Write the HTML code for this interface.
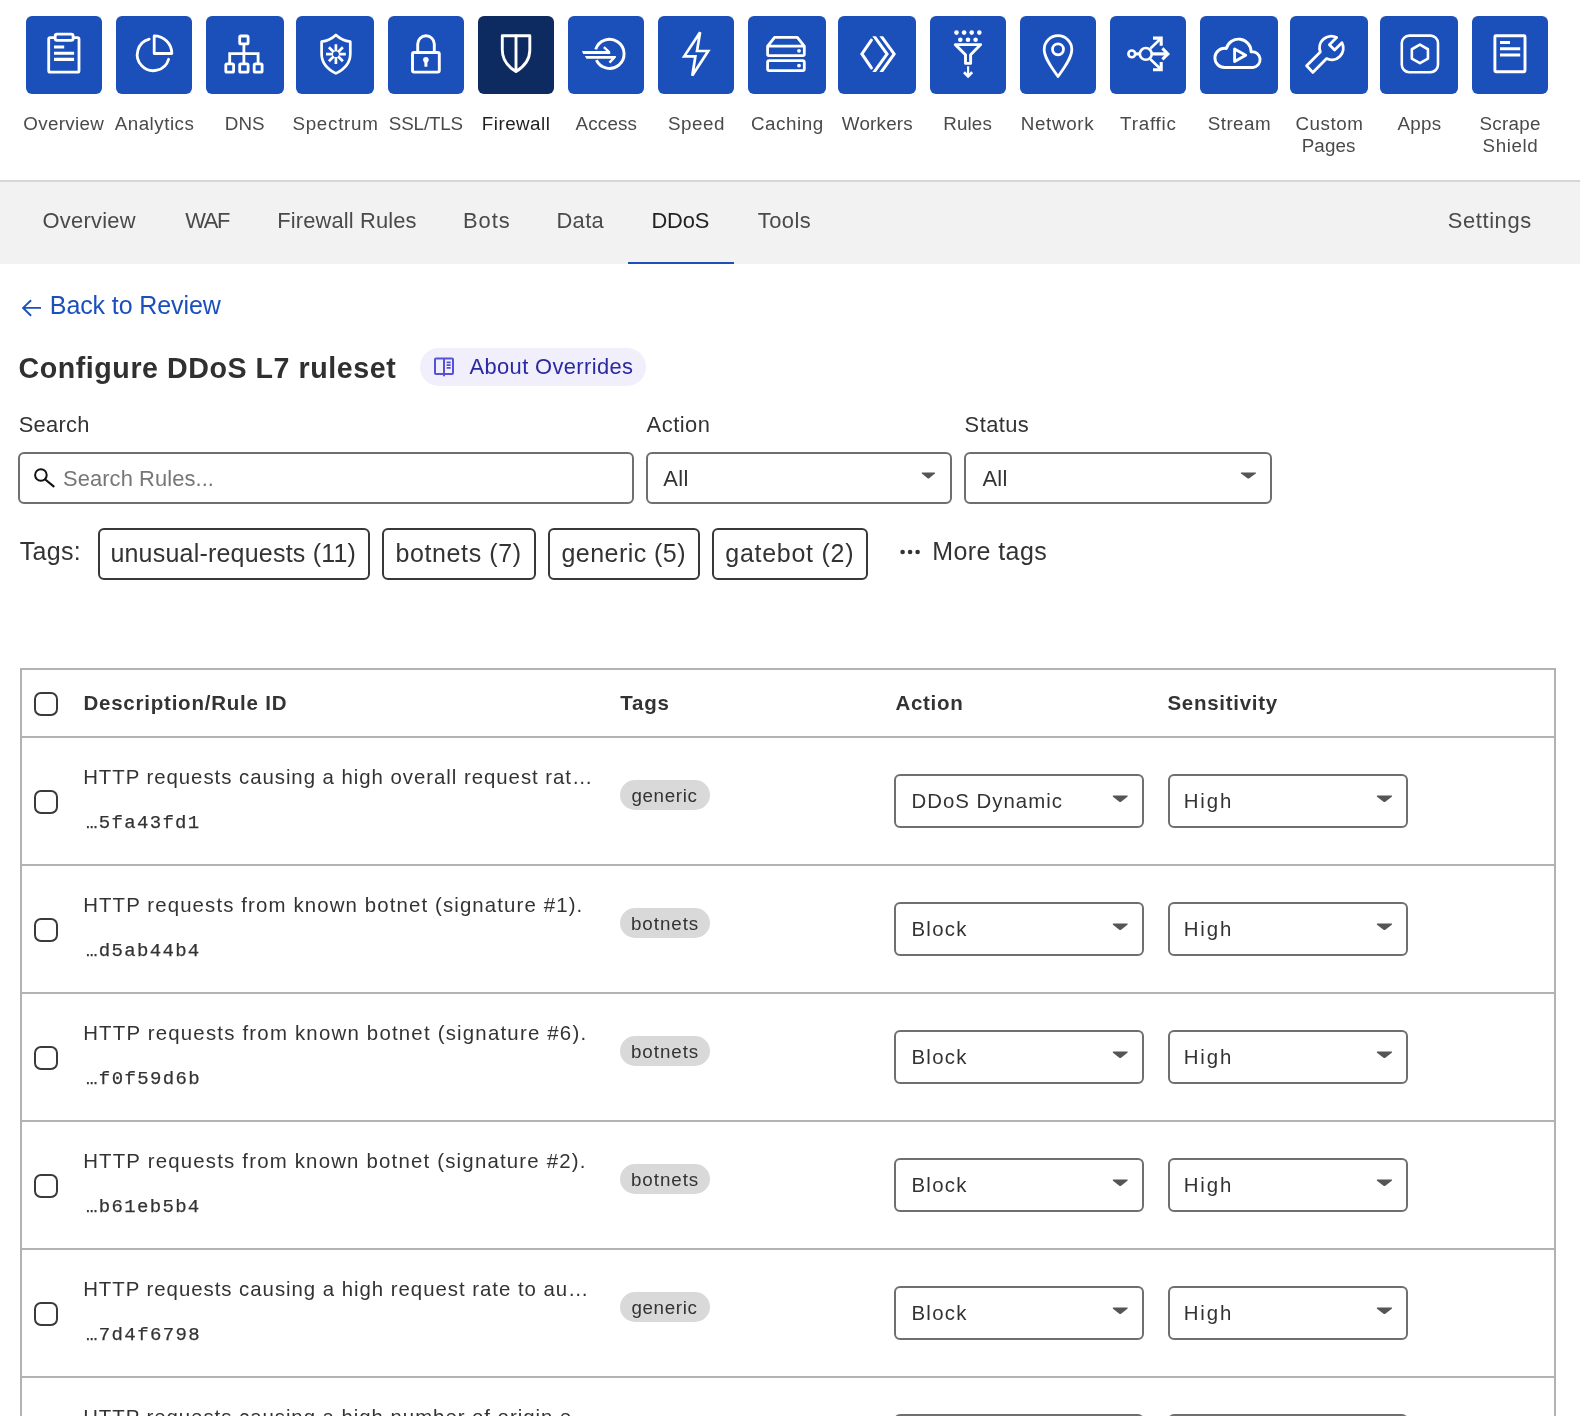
<!DOCTYPE html>
<html lang="en"><head><meta charset="utf-8"><title>Configure DDoS L7 ruleset</title>
<style>
html,body{margin:0;padding:0;background:#fff}
body{width:1580px;height:1416px;position:relative;overflow:hidden;font-family:"Liberation Sans",sans-serif;font-kerning:normal;-webkit-font-smoothing:antialiased}
.t{position:absolute;white-space:pre;line-height:1;display:block}
.b{position:absolute;box-sizing:border-box}
svg{position:absolute;overflow:visible}
#page{position:absolute;left:0;top:0;width:1580px;height:1416px;will-change:transform}
</style></head><body><div id="page">
<div class="b" style="left:26.00px;top:16.00px;width:76.00px;height:78.00px;background:#1b50bb;border-radius:6px"></div>
<span class="t" style="left:23.26px;top:115.10px;font-size:18.80px;letter-spacing:0.314px;color:#4a4a4a;">Overview</span>
<div class="b" style="left:116.00px;top:16.00px;width:76.00px;height:78.00px;background:#1b50bb;border-radius:6px"></div>
<span class="t" style="left:114.71px;top:115.10px;font-size:18.80px;letter-spacing:0.499px;color:#4a4a4a;">Analytics</span>
<div class="b" style="left:206.00px;top:16.00px;width:78.00px;height:78.00px;background:#1b50bb;border-radius:6px"></div>
<span class="t" style="left:224.66px;top:115.10px;font-size:18.80px;letter-spacing:0.156px;color:#4a4a4a;">DNS</span>
<div class="b" style="left:296.00px;top:16.00px;width:78.00px;height:78.00px;background:#1b50bb;border-radius:6px"></div>
<span class="t" style="left:292.40px;top:115.10px;font-size:18.80px;letter-spacing:0.735px;color:#4a4a4a;">Spectrum</span>
<div class="b" style="left:388.00px;top:16.00px;width:76.00px;height:78.00px;background:#1b50bb;border-radius:6px"></div>
<span class="t" style="left:388.85px;top:115.10px;font-size:18.80px;letter-spacing:-0.153px;color:#4a4a4a;">SSL/TLS</span>
<div class="b" style="left:478.00px;top:16.00px;width:76.00px;height:78.00px;background:#0d2a61;border-radius:6px"></div>
<span class="t" style="left:481.81px;top:115.10px;font-size:18.80px;letter-spacing:0.477px;color:#1f1f1f;">Firewall</span>
<div class="b" style="left:568.00px;top:16.00px;width:76.00px;height:78.00px;background:#1b50bb;border-radius:6px"></div>
<span class="t" style="left:575.61px;top:115.10px;font-size:18.80px;letter-spacing:0.164px;color:#4a4a4a;">Access</span>
<div class="b" style="left:658.00px;top:16.00px;width:76.00px;height:78.00px;background:#1b50bb;border-radius:6px"></div>
<span class="t" style="left:667.95px;top:115.10px;font-size:18.80px;letter-spacing:0.526px;color:#4a4a4a;">Speed</span>
<div class="b" style="left:748.00px;top:16.00px;width:78.00px;height:78.00px;background:#1b50bb;border-radius:6px"></div>
<span class="t" style="left:751.00px;top:115.10px;font-size:18.80px;letter-spacing:0.548px;color:#4a4a4a;">Caching</span>
<div class="b" style="left:838.00px;top:16.00px;width:78.00px;height:78.00px;background:#1b50bb;border-radius:6px"></div>
<span class="t" style="left:841.87px;top:115.10px;font-size:18.80px;letter-spacing:0.204px;color:#4a4a4a;">Workers</span>
<div class="b" style="left:930.00px;top:16.00px;width:76.00px;height:78.00px;background:#1b50bb;border-radius:6px"></div>
<span class="t" style="left:943.26px;top:115.10px;font-size:18.80px;letter-spacing:0.139px;color:#4a4a4a;">Rules</span>
<div class="b" style="left:1020.00px;top:16.00px;width:76.00px;height:78.00px;background:#1b50bb;border-radius:6px"></div>
<span class="t" style="left:1020.66px;top:115.10px;font-size:18.80px;letter-spacing:0.694px;color:#4a4a4a;">Network</span>
<div class="b" style="left:1110.00px;top:16.00px;width:76.00px;height:78.00px;background:#1b50bb;border-radius:6px"></div>
<span class="t" style="left:1120.08px;top:115.10px;font-size:18.80px;letter-spacing:0.789px;color:#4a4a4a;">Traffic</span>
<div class="b" style="left:1200.00px;top:16.00px;width:78.00px;height:78.00px;background:#1b50bb;border-radius:6px"></div>
<span class="t" style="left:1207.80px;top:115.10px;font-size:18.80px;letter-spacing:0.440px;color:#4a4a4a;">Stream</span>
<div class="b" style="left:1290.00px;top:16.00px;width:78.00px;height:78.00px;background:#1b50bb;border-radius:6px"></div>
<span class="t" style="left:1295.40px;top:115.10px;font-size:18.80px;letter-spacing:0.544px;color:#4a4a4a;">Custom</span>
<span class="t" style="left:1301.76px;top:137.10px;font-size:18.80px;letter-spacing:0.079px;color:#4a4a4a;">Pages</span>
<div class="b" style="left:1380.00px;top:16.00px;width:78.00px;height:78.00px;background:#1b50bb;border-radius:6px"></div>
<span class="t" style="left:1397.41px;top:115.10px;font-size:18.80px;letter-spacing:0.322px;color:#4a4a4a;">Apps</span>
<div class="b" style="left:1472.00px;top:16.00px;width:76.00px;height:78.00px;background:#1b50bb;border-radius:6px"></div>
<span class="t" style="left:1479.40px;top:115.10px;font-size:18.80px;letter-spacing:0.324px;color:#4a4a4a;">Scrape</span>
<span class="t" style="left:1482.55px;top:137.10px;font-size:18.80px;letter-spacing:0.601px;color:#4a4a4a;">Shield</span>
<svg width="1580" height="100" viewBox="0 0 1580 100" style="left:0;top:0"><g fill="none" stroke="#fff" stroke-linecap="round" stroke-linejoin="round" stroke-width="2.8"><rect x="48.7" y="37.6" width="30.3" height="34.6" rx="1.5"/><rect x="55.2" y="34.2" width="17.9" height="6.1" rx="1.8" fill="#1b50bb"/></g><g stroke="#fff" stroke-width="3.1" stroke-linecap="butt"><path d="M54 47H64.2M54 53.3H74.1M54 59.4H74.1"/></g><g fill="none" stroke="#fff" stroke-linecap="round" stroke-linejoin="round" stroke-width="2.8"><path d="M149.2 39.2A16 16 0 1 0 168.6 59.3"/><path d="M154.2 35.9A17.6 17.6 0 0 1 171.8 53.5H154.2Z"/></g><g fill="none" stroke="#fff" stroke-linecap="round" stroke-linejoin="round" stroke-width="2.8"><rect x="239.7" y="36" width="8.4" height="7.9" rx="1.2"/><rect x="225.8" y="63.9" width="7.8" height="8.2" rx="1.2"/><rect x="239.7" y="63.9" width="8.4" height="8.2" rx="1.2"/><rect x="254.2" y="63.9" width="7.9" height="8.2" rx="1.2"/><path d="M243.9 44.5V63M229.7 63V53.6H258.1V63" stroke-linecap="butt" stroke-linejoin="miter"/></g><g fill="none" stroke="#fff" stroke-linecap="round" stroke-linejoin="round" stroke-width="2.7"><path d="M335.9 34.9C332 38.5 327 40.8 321.6 41.7V54C321.6 63 328 69.5 335.9 73.4C343.8 69.5 350.3 63 350.3 54V41.7C344.8 40.8 339.8 38.5 335.9 34.9Z"/></g><path d="M338.40 54.20L345.80 54.20M337.67 55.97L342.90 61.20M335.90 56.70L335.90 64.10M334.13 55.97L328.90 61.20M333.40 54.20L326.00 54.20M334.13 52.43L328.90 47.20M335.90 51.70L335.90 44.30M337.67 52.43L342.90 47.20" stroke="#fff" stroke-width="2.7" fill="none"/><circle cx="335.9" cy="54.2" r="2.8" fill="#1b50bb"/><g fill="none" stroke="#fff" stroke-linecap="round" stroke-linejoin="round" stroke-width="2.9"><rect x="412.5" y="52.5" width="26.8" height="19.6" rx="1.5"/><path d="M417.7 52V44.1A8.3 8.3 0 0 1 434.3 44.1V52" stroke-linecap="butt"/></g><circle cx="425.9" cy="59.8" r="2.8" fill="#fff"/><rect x="424.4" y="60" width="3" height="6.7" fill="#fff"/><g fill="none" stroke="#fff" stroke-linecap="round" stroke-linejoin="round" stroke-width="2.9"><path d="M502.3 35.8H529.8V50C529.8 60 523.5 67 516 71.6C508.5 67 502.3 60 502.3 50Z"/><path d="M516 36V71"/></g><path d="M595.7 49.4A14.55 14.55 0 1 1 596.4 60.2" fill="none" stroke="#fff" stroke-width="2.9"/><g fill="#fff"><path d="M582 50.9H606.3L603.1 47.9L604.7 46.3L610.2 51.6V53.9H583.2Z"/><path d="M584.9 56H615.9V57.6L610.4 63.6L608.6 61.8L611.4 58.7H586.4Z"/></g><g fill="none" stroke="#fff" stroke-width="2.7" stroke-linejoin="miter" stroke-miterlimit="3"><path d="M700.1 32.2L684.2 56.3H695.4L692.3 75.6L708.2 51H697Z"/></g><g fill="none" stroke="#fff" stroke-linecap="round" stroke-linejoin="round" stroke-width="2.8"><path d="M767.6 46.2L774.6 37.4H797.3L804.3 46.2V54.3Q804.3 55.6 803 55.6H768.9Q767.6 55.6 767.6 54.3ZM767.6 46.2H804.3"/><rect x="767.6" y="60.6" width="36.7" height="10.1" rx="1.6"/></g><circle cx="799" cy="50.8" r="1.9" fill="#fff"/><circle cx="799" cy="65.6" r="1.9" fill="#fff"/><g fill="none" stroke="#fff" stroke-width="3" stroke-linejoin="miter" stroke-linecap="butt"><path d="M871.4 40.2L861.9 53.9L871.4 67.9" stroke-linecap="round"/></g><g fill="#fff"><path d="M872.3 36.2H876L888.9 53.9L876 71.9H872.3L885.2 53.9Z"/><path d="M879.4 36.2H883.1L896 53.9L883.1 71.9H879.4L892.3 53.9Z"/></g><g fill="#fff"><circle cx="956.5" cy="32.6" r="2.3"/><circle cx="964.1" cy="32.6" r="2.3"/><circle cx="971.7" cy="32.6" r="2.3"/><circle cx="979.3" cy="32.6" r="2.3"/><circle cx="960.3" cy="39.8" r="2.3"/><circle cx="968.0" cy="39.8" r="2.3"/><circle cx="975.6" cy="39.8" r="2.3"/></g><g fill="none" stroke="#fff" stroke-linecap="round" stroke-linejoin="round" stroke-width="2.9"><path d="M955.3 44.6H980.7L970.6 54.8V63.4H965.5V54.8Z"/></g><g fill="none" stroke="#fff"><path d="M968.1 66.3V75" stroke-width="2.2"/><path d="M964 72.2L968.1 76.3L972.2 72.2" stroke-width="2.7" stroke-linejoin="miter"/></g><g fill="none" stroke="#fff" stroke-linecap="round" stroke-linejoin="round" stroke-width="2.8"><path d="M1058 76.5C1052 68 1044.2 58 1044.2 49.4A13.8 13.8 0 0 1 1071.8 49.4C1071.8 58 1064 68 1058 76.5Z"/><circle cx="1058" cy="49.3" r="5.5"/></g><g fill="none" stroke="#fff" stroke-width="2.6" stroke-linecap="butt" stroke-linejoin="miter"><circle cx="1131.8" cy="53.9" r="3.4"/><circle cx="1145.8" cy="53.9" r="5.9"/><path d="M1135.2 53.9H1140" stroke-width="3.2"/><path d="M1151.7 53.9H1167" stroke-width="3.2"/><path d="M1162.4 48.4L1167.9 53.9L1162.4 59.4" stroke-width="3"/><path d="M1150.4 48.5L1160.6 38.8M1150.4 59.3L1160.6 69"/><path d="M1153 38.1H1161.2V45.8M1153 69.7H1161.2V62" stroke-width="3.1"/></g><g fill="none" stroke="#fff" stroke-linecap="round" stroke-linejoin="round" stroke-width="2.9"><path d="M1225 67.5H1252.8A7.9 7.9 0 1 0 1251.1 51.8A12.55 12.55 0 0 0 1226.4 48.5A9.6 9.6 0 1 0 1225 67.5Z"/><path d="M1234.6 48.9V61.6L1245.7 55.2Z"/></g><g fill="none" stroke="#fff" stroke-linecap="round" stroke-linejoin="round" stroke-width="2.8"><path d="M1336.6 37.6A11.6 11.6 0 0 0 1320.3 52L1306.6 65.8L1312.8 72.4L1326.6 58.6A11.6 11.6 0 0 0 1341.9 42.7L1334.6 49.9L1329.4 44.7Z"/></g><g fill="none" stroke="#fff" stroke-linecap="round" stroke-linejoin="round" stroke-width="2.6"><rect x="1401.8" y="35.6" width="36.2" height="36.6" rx="7.5"/><path d="M1419.90 44.60L1427.95 49.25L1427.95 58.55L1419.90 63.20L1411.85 58.55L1411.85 49.25Z"/></g><g fill="none" stroke="#fff" stroke-linecap="round" stroke-linejoin="round" stroke-width="2.9"><rect x="1494.9" y="35.8" width="30.1" height="35.9" rx="1"/></g><g stroke="#fff" stroke-width="3" fill="none"><path d="M1500 42.5H1510M1500 48.7H1520.2M1500 55H1520.2"/></g></svg>
<div class="b" style="left:0.00px;top:180.00px;width:1580.00px;height:2.00px;background:#d6d6d6"></div>
<div class="b" style="left:0.00px;top:182.00px;width:1580.00px;height:82.00px;background:#f2f2f2"></div>
<div class="b" style="left:628.00px;top:262.00px;width:106.00px;height:2.00px;background:#1b50bb"></div>
<span class="t" style="left:42.46px;top:210.10px;font-size:21.90px;letter-spacing:0.274px;color:#4a4a4a;">Overview</span>
<span class="t" style="left:185.20px;top:210.10px;font-size:21.90px;letter-spacing:-1.284px;color:#4a4a4a;">WAF</span>
<span class="t" style="left:277.20px;top:210.10px;font-size:21.90px;letter-spacing:0.144px;color:#4a4a4a;">Firewall Rules</span>
<span class="t" style="left:463.10px;top:210.10px;font-size:21.90px;letter-spacing:0.922px;color:#4a4a4a;">Bots</span>
<span class="t" style="left:556.40px;top:210.10px;font-size:21.90px;letter-spacing:0.379px;color:#4a4a4a;">Data</span>
<span class="t" style="left:757.71px;top:210.10px;font-size:21.90px;letter-spacing:0.490px;color:#4a4a4a;">Tools</span>
<span class="t" style="left:1447.71px;top:210.10px;font-size:21.90px;letter-spacing:0.622px;color:#4a4a4a;">Settings</span>
<span class="t" style="left:651.40px;top:210.10px;font-size:21.90px;letter-spacing:-0.105px;color:#222;">DDoS</span>
<svg width="24" height="20" viewBox="0 0 24 20" style="left:20px;top:298px"><path d="M3.2 9.9H21M11.1 2.2L3.1 9.9L11.1 17.7" fill="none" stroke="#1b50bb" stroke-width="1.9" stroke-linecap="butt" stroke-linejoin="miter"/></svg>
<span class="t" style="left:49.85px;top:293.10px;font-size:25.00px;letter-spacing:-0.108px;color:#1b50bb;">Back to Review</span>
<span class="t" style="left:18.53px;top:354.10px;font-size:28.60px;letter-spacing:0.555px;color:#303030;font-weight:700;">Configure DDoS L7 ruleset</span>
<div class="b" style="left:420.00px;top:348.00px;width:226.00px;height:38.00px;background:#f0effb;border-radius:19px"></div>
<svg width="24" height="22" viewBox="432 356 24 22" style="left:432px;top:356px"><g fill="none" stroke="#5552d6" stroke-width="2" stroke-linejoin="round"><path d="M444 358.5H436Q435 358.5 435 359.5V373Q435 374 436 374H444M444 358.5H452Q453 358.5 453 359.5V373Q453 374 452 374H444M444 358.5V375.4" stroke-linecap="round"/><path d="M446.6 362.3H450.7M446.6 365.1H450.7M446.6 367.9H450.7" stroke-width="1.7"/></g></svg>
<span class="t" style="left:469.56px;top:356.10px;font-size:21.90px;letter-spacing:0.371px;color:#2b28a3;">About Overrides</span>
<span class="t" style="left:18.71px;top:414.10px;font-size:21.90px;letter-spacing:0.265px;color:#333;">Search</span>
<span class="t" style="left:646.56px;top:414.10px;font-size:21.90px;letter-spacing:0.520px;color:#333;">Action</span>
<span class="t" style="left:964.61px;top:414.10px;font-size:21.90px;letter-spacing:0.420px;color:#333;">Status</span>
<div class="b" style="left:18.00px;top:452.00px;width:616.00px;height:52.00px;border:2px solid #6f6f6f;border-radius:6px;background:#fff"></div>
<div class="b" style="left:646.00px;top:452.00px;width:306.00px;height:52.00px;border:2px solid #6f6f6f;border-radius:6px;background:#fff"></div>
<div class="b" style="left:964.00px;top:452.00px;width:308.00px;height:52.00px;border:2px solid #6f6f6f;border-radius:6px;background:#fff"></div>
<svg width="26" height="26" viewBox="32 465 26 26" style="left:32px;top:465px"><circle cx="40.9" cy="475" r="5.8" fill="none" stroke="#111" stroke-width="2"/><path d="M45.3 479.5L53.6 486.4" stroke="#111" stroke-width="2.2" stroke-linecap="round"/></svg>
<span class="t" style="left:63.01px;top:468.10px;font-size:21.90px;letter-spacing:0.091px;color:#767676;">Search Rules...</span>
<span class="t" style="left:663.16px;top:468.10px;font-size:21.90px;letter-spacing:0.385px;color:#333;">All</span>
<span class="t" style="left:982.46px;top:468.10px;font-size:21.90px;letter-spacing:0.235px;color:#333;">All</span>
<svg width="14.8" height="6.9" viewBox="0 0 16 8" preserveAspectRatio="none" style="left:921.4px;top:471.7px"><path d="M1.2 0.6H14.8Q15.8 0.9 15 1.8L8.9 7.3Q8 8 7.1 7.3L1 1.8Q0.2 0.9 1.2 0.6Z" fill="#555"/></svg>
<svg width="16.8" height="6.9" viewBox="0 0 16 8" preserveAspectRatio="none" style="left:1239.6px;top:471.7px"><path d="M1.2 0.6H14.8Q15.8 0.9 15 1.8L8.9 7.3Q8 8 7.1 7.3L1 1.8Q0.2 0.9 1.2 0.6Z" fill="#555"/></svg>
<span class="t" style="left:19.64px;top:539.10px;font-size:25.00px;letter-spacing:0.348px;color:#333;">Tags:</span>
<div class="b" style="left:98.00px;top:528.00px;width:272.00px;height:52.00px;border:2px solid #383838;border-radius:6px;background:#fff"></div>
<span class="t" style="left:110.38px;top:541.10px;font-size:25.00px;letter-spacing:0.212px;color:#333;">unusual-requests (11)</span>
<div class="b" style="left:382.00px;top:528.00px;width:154.00px;height:52.00px;border:2px solid #383838;border-radius:6px;background:#fff"></div>
<span class="t" style="left:395.59px;top:541.10px;font-size:25.00px;letter-spacing:0.595px;color:#333;">botnets (7)</span>
<div class="b" style="left:548.00px;top:528.00px;width:152.00px;height:52.00px;border:2px solid #383838;border-radius:6px;background:#fff"></div>
<span class="t" style="left:561.45px;top:541.10px;font-size:25.00px;letter-spacing:0.461px;color:#333;">generic (5)</span>
<div class="b" style="left:712.00px;top:528.00px;width:156.00px;height:52.00px;border:2px solid #383838;border-radius:6px;background:#fff"></div>
<span class="t" style="left:725.25px;top:541.10px;font-size:25.00px;letter-spacing:0.729px;color:#333;">gatebot (2)</span>
<svg width="24" height="8" viewBox="898 548 24 8" style="left:898px;top:548px"><g fill="#333"><circle cx="902.6" cy="552" r="2.3"/><circle cx="910.1" cy="552" r="2.3"/><circle cx="917.6" cy="552" r="2.3"/></g></svg>
<span class="t" style="left:932.35px;top:539.10px;font-size:25.00px;letter-spacing:0.400px;color:#333;">More tags</span>
<div class="b" style="left:20.00px;top:668.00px;width:1536.00px;height:832.00px;border:2px solid #b2b2b2"></div>
<div class="b" style="left:22.00px;top:736.00px;width:1532.00px;height:2.00px;background:#b2b2b2"></div>
<div class="b" style="left:22.00px;top:864.00px;width:1532.00px;height:2.00px;background:#b2b2b2"></div>
<div class="b" style="left:22.00px;top:992.00px;width:1532.00px;height:2.00px;background:#b2b2b2"></div>
<div class="b" style="left:22.00px;top:1120.00px;width:1532.00px;height:2.00px;background:#b2b2b2"></div>
<div class="b" style="left:22.00px;top:1248.00px;width:1532.00px;height:2.00px;background:#b2b2b2"></div>
<div class="b" style="left:22.00px;top:1376.00px;width:1532.00px;height:2.00px;background:#b2b2b2"></div>
<div class="b" style="left:34.00px;top:692.00px;width:24.00px;height:24.00px;border:2px solid #3a3a3a;border-radius:7px;background:#fff"></div>
<span class="t" style="left:83.43px;top:693.10px;font-size:20.50px;letter-spacing:0.775px;color:#333;font-weight:700;">Description/Rule ID</span>
<span class="t" style="left:620.27px;top:693.10px;font-size:20.50px;letter-spacing:0.749px;color:#333;font-weight:700;">Tags</span>
<span class="t" style="left:895.49px;top:693.10px;font-size:20.50px;letter-spacing:0.702px;color:#333;font-weight:700;">Action</span>
<span class="t" style="left:1167.41px;top:693.10px;font-size:20.50px;letter-spacing:0.716px;color:#333;font-weight:700;">Sensitivity</span>
<div class="b" style="left:34.00px;top:790.00px;width:24.00px;height:24.00px;border:2px solid #3a3a3a;border-radius:7px;background:#fff"></div>
<span class="t" style="left:83.13px;top:767.10px;font-size:20.40px;letter-spacing:0.960px;color:#333;">HTTP requests causing a high overall request rat…</span>
<span class="t" style="left:86.11px;top:814.10px;font-size:19.00px;letter-spacing:1.311px;color:#333;font-family:'Liberation Mono',monospace;-webkit-text-stroke:0.25px #333;">…5fa43fd1</span>
<div class="b" style="left:620.00px;top:780.00px;width:90.00px;height:30.00px;background:#d9d9d9;border-radius:15px"></div>
<span class="t" style="left:631.41px;top:787.10px;font-size:18.80px;letter-spacing:0.638px;color:#333;">generic</span>
<div class="b" style="left:894.00px;top:774.00px;width:250.00px;height:54.00px;border:2px solid #6f6f6f;border-radius:6px;background:#fff"></div>
<div class="b" style="left:1168.00px;top:774.00px;width:240.00px;height:54.00px;border:2px solid #6f6f6f;border-radius:6px;background:#fff"></div>
<span class="t" style="left:911.43px;top:791.10px;font-size:20.40px;letter-spacing:1.007px;color:#333;">DDoS Dynamic</span>
<span class="t" style="left:1183.73px;top:791.10px;font-size:20.40px;letter-spacing:1.881px;color:#333;">High</span>
<svg width="16.4" height="7.3" viewBox="0 0 16 8" preserveAspectRatio="none" style="left:1111.9px;top:795.4px"><path d="M1.2 0.6H14.8Q15.8 0.9 15 1.8L8.9 7.3Q8 8 7.1 7.3L1 1.8Q0.2 0.9 1.2 0.6Z" fill="#555"/></svg>
<svg width="16.8" height="7.3" viewBox="0 0 16 8" preserveAspectRatio="none" style="left:1375.6px;top:795.4px"><path d="M1.2 0.6H14.8Q15.8 0.9 15 1.8L8.9 7.3Q8 8 7.1 7.3L1 1.8Q0.2 0.9 1.2 0.6Z" fill="#555"/></svg>
<div class="b" style="left:34.00px;top:918.00px;width:24.00px;height:24.00px;border:2px solid #3a3a3a;border-radius:7px;background:#fff"></div>
<span class="t" style="left:83.13px;top:895.10px;font-size:20.40px;letter-spacing:1.127px;color:#333;">HTTP requests from known botnet (signature #1).</span>
<span class="t" style="left:86.11px;top:942.10px;font-size:19.00px;letter-spacing:1.317px;color:#333;font-family:'Liberation Mono',monospace;-webkit-text-stroke:0.25px #333;">…d5ab44b4</span>
<div class="b" style="left:620.00px;top:908.00px;width:90.00px;height:30.00px;background:#d9d9d9;border-radius:15px"></div>
<span class="t" style="left:630.99px;top:915.10px;font-size:18.80px;letter-spacing:0.937px;color:#333;">botnets</span>
<div class="b" style="left:894.00px;top:902.00px;width:250.00px;height:54.00px;border:2px solid #6f6f6f;border-radius:6px;background:#fff"></div>
<div class="b" style="left:1168.00px;top:902.00px;width:240.00px;height:54.00px;border:2px solid #6f6f6f;border-radius:6px;background:#fff"></div>
<span class="t" style="left:911.43px;top:919.10px;font-size:20.40px;letter-spacing:1.290px;color:#333;">Block</span>
<span class="t" style="left:1183.73px;top:919.10px;font-size:20.40px;letter-spacing:1.881px;color:#333;">High</span>
<svg width="16.4" height="7.3" viewBox="0 0 16 8" preserveAspectRatio="none" style="left:1111.9px;top:923.4px"><path d="M1.2 0.6H14.8Q15.8 0.9 15 1.8L8.9 7.3Q8 8 7.1 7.3L1 1.8Q0.2 0.9 1.2 0.6Z" fill="#555"/></svg>
<svg width="16.8" height="7.3" viewBox="0 0 16 8" preserveAspectRatio="none" style="left:1375.6px;top:923.4px"><path d="M1.2 0.6H14.8Q15.8 0.9 15 1.8L8.9 7.3Q8 8 7.1 7.3L1 1.8Q0.2 0.9 1.2 0.6Z" fill="#555"/></svg>
<div class="b" style="left:34.00px;top:1046.00px;width:24.00px;height:24.00px;border:2px solid #3a3a3a;border-radius:7px;background:#fff"></div>
<span class="t" style="left:83.13px;top:1023.10px;font-size:20.40px;letter-spacing:1.210px;color:#333;">HTTP requests from known botnet (signature #6).</span>
<span class="t" style="left:86.11px;top:1070.10px;font-size:19.00px;letter-spacing:1.357px;color:#333;font-family:'Liberation Mono',monospace;-webkit-text-stroke:0.25px #333;">…f0f59d6b</span>
<div class="b" style="left:620.00px;top:1036.00px;width:90.00px;height:30.00px;background:#d9d9d9;border-radius:15px"></div>
<span class="t" style="left:630.99px;top:1043.10px;font-size:18.80px;letter-spacing:0.937px;color:#333;">botnets</span>
<div class="b" style="left:894.00px;top:1030.00px;width:250.00px;height:54.00px;border:2px solid #6f6f6f;border-radius:6px;background:#fff"></div>
<div class="b" style="left:1168.00px;top:1030.00px;width:240.00px;height:54.00px;border:2px solid #6f6f6f;border-radius:6px;background:#fff"></div>
<span class="t" style="left:911.43px;top:1047.10px;font-size:20.40px;letter-spacing:1.290px;color:#333;">Block</span>
<span class="t" style="left:1183.73px;top:1047.10px;font-size:20.40px;letter-spacing:1.881px;color:#333;">High</span>
<svg width="16.4" height="7.3" viewBox="0 0 16 8" preserveAspectRatio="none" style="left:1111.9px;top:1051.4px"><path d="M1.2 0.6H14.8Q15.8 0.9 15 1.8L8.9 7.3Q8 8 7.1 7.3L1 1.8Q0.2 0.9 1.2 0.6Z" fill="#555"/></svg>
<svg width="16.8" height="7.3" viewBox="0 0 16 8" preserveAspectRatio="none" style="left:1375.6px;top:1051.4px"><path d="M1.2 0.6H14.8Q15.8 0.9 15 1.8L8.9 7.3Q8 8 7.1 7.3L1 1.8Q0.2 0.9 1.2 0.6Z" fill="#555"/></svg>
<div class="b" style="left:34.00px;top:1174.00px;width:24.00px;height:24.00px;border:2px solid #3a3a3a;border-radius:7px;background:#fff"></div>
<span class="t" style="left:83.13px;top:1151.10px;font-size:20.40px;letter-spacing:1.197px;color:#333;">HTTP requests from known botnet (signature #2).</span>
<span class="t" style="left:86.11px;top:1198.10px;font-size:19.00px;letter-spacing:1.317px;color:#333;font-family:'Liberation Mono',monospace;-webkit-text-stroke:0.25px #333;">…b61eb5b4</span>
<div class="b" style="left:620.00px;top:1164.00px;width:90.00px;height:30.00px;background:#d9d9d9;border-radius:15px"></div>
<span class="t" style="left:630.99px;top:1171.10px;font-size:18.80px;letter-spacing:0.937px;color:#333;">botnets</span>
<div class="b" style="left:894.00px;top:1158.00px;width:250.00px;height:54.00px;border:2px solid #6f6f6f;border-radius:6px;background:#fff"></div>
<div class="b" style="left:1168.00px;top:1158.00px;width:240.00px;height:54.00px;border:2px solid #6f6f6f;border-radius:6px;background:#fff"></div>
<span class="t" style="left:911.43px;top:1175.10px;font-size:20.40px;letter-spacing:1.290px;color:#333;">Block</span>
<span class="t" style="left:1183.73px;top:1175.10px;font-size:20.40px;letter-spacing:1.881px;color:#333;">High</span>
<svg width="16.4" height="7.3" viewBox="0 0 16 8" preserveAspectRatio="none" style="left:1111.9px;top:1179.4px"><path d="M1.2 0.6H14.8Q15.8 0.9 15 1.8L8.9 7.3Q8 8 7.1 7.3L1 1.8Q0.2 0.9 1.2 0.6Z" fill="#555"/></svg>
<svg width="16.8" height="7.3" viewBox="0 0 16 8" preserveAspectRatio="none" style="left:1375.6px;top:1179.4px"><path d="M1.2 0.6H14.8Q15.8 0.9 15 1.8L8.9 7.3Q8 8 7.1 7.3L1 1.8Q0.2 0.9 1.2 0.6Z" fill="#555"/></svg>
<div class="b" style="left:34.00px;top:1302.00px;width:24.00px;height:24.00px;border:2px solid #3a3a3a;border-radius:7px;background:#fff"></div>
<span class="t" style="left:83.13px;top:1279.10px;font-size:20.40px;letter-spacing:0.969px;color:#333;">HTTP requests causing a high request rate to au…</span>
<span class="t" style="left:86.11px;top:1326.10px;font-size:19.00px;letter-spacing:1.353px;color:#333;font-family:'Liberation Mono',monospace;-webkit-text-stroke:0.25px #333;">…7d4f6798</span>
<div class="b" style="left:620.00px;top:1292.00px;width:90.00px;height:30.00px;background:#d9d9d9;border-radius:15px"></div>
<span class="t" style="left:631.41px;top:1299.10px;font-size:18.80px;letter-spacing:0.638px;color:#333;">generic</span>
<div class="b" style="left:894.00px;top:1286.00px;width:250.00px;height:54.00px;border:2px solid #6f6f6f;border-radius:6px;background:#fff"></div>
<div class="b" style="left:1168.00px;top:1286.00px;width:240.00px;height:54.00px;border:2px solid #6f6f6f;border-radius:6px;background:#fff"></div>
<span class="t" style="left:911.43px;top:1303.10px;font-size:20.40px;letter-spacing:1.290px;color:#333;">Block</span>
<span class="t" style="left:1183.73px;top:1303.10px;font-size:20.40px;letter-spacing:1.881px;color:#333;">High</span>
<svg width="16.4" height="7.3" viewBox="0 0 16 8" preserveAspectRatio="none" style="left:1111.9px;top:1307.4px"><path d="M1.2 0.6H14.8Q15.8 0.9 15 1.8L8.9 7.3Q8 8 7.1 7.3L1 1.8Q0.2 0.9 1.2 0.6Z" fill="#555"/></svg>
<svg width="16.8" height="7.3" viewBox="0 0 16 8" preserveAspectRatio="none" style="left:1375.6px;top:1307.4px"><path d="M1.2 0.6H14.8Q15.8 0.9 15 1.8L8.9 7.3Q8 8 7.1 7.3L1 1.8Q0.2 0.9 1.2 0.6Z" fill="#555"/></svg>
<div class="b" style="left:34.00px;top:1430.00px;width:24.00px;height:24.00px;border:2px solid #3a3a3a;border-radius:7px;background:#fff"></div>
<span class="t" style="left:83.13px;top:1407.10px;font-size:20.40px;letter-spacing:0.960px;color:#333;">HTTP requests causing a high number of origin e…</span>
<div class="b" style="left:620.00px;top:1420.00px;width:90.00px;height:30.00px;background:#d9d9d9;border-radius:15px"></div>
<span class="t" style="left:631.41px;top:1427.10px;font-size:18.80px;letter-spacing:0.638px;color:#333;">generic</span>
<div class="b" style="left:894.00px;top:1414.00px;width:250.00px;height:54.00px;border:2px solid #6f6f6f;border-radius:6px;background:#fff"></div>
<div class="b" style="left:1168.00px;top:1414.00px;width:240.00px;height:54.00px;border:2px solid #6f6f6f;border-radius:6px;background:#fff"></div>
<span class="t" style="left:911.43px;top:1431.10px;font-size:20.40px;letter-spacing:1.290px;color:#333;">Block</span>
<span class="t" style="left:1183.73px;top:1431.10px;font-size:20.40px;letter-spacing:1.881px;color:#333;">High</span>
<svg width="16.4" height="7.3" viewBox="0 0 16 8" preserveAspectRatio="none" style="left:1111.9px;top:1435.4px"><path d="M1.2 0.6H14.8Q15.8 0.9 15 1.8L8.9 7.3Q8 8 7.1 7.3L1 1.8Q0.2 0.9 1.2 0.6Z" fill="#555"/></svg>
<svg width="16.8" height="7.3" viewBox="0 0 16 8" preserveAspectRatio="none" style="left:1375.6px;top:1435.4px"><path d="M1.2 0.6H14.8Q15.8 0.9 15 1.8L8.9 7.3Q8 8 7.1 7.3L1 1.8Q0.2 0.9 1.2 0.6Z" fill="#555"/></svg>
</div></body></html>
